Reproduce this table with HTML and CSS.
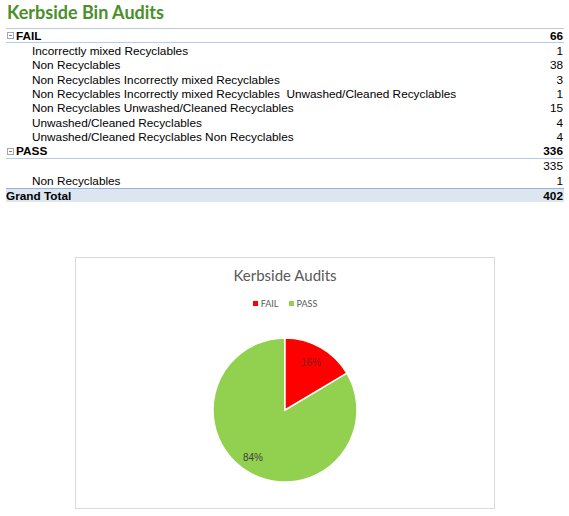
FILE: index.html
```html
<!DOCTYPE html>
<html>
<head>
    <title>Kerbside Bin Audits</title>
    <link rel="stylesheet" href="styles.css">
</head>
<body>
    <h1 class="title">Kerbside Bin Audits</h1>

    <div class="pivot">
        <div class="row group">
            <span class="label"><span class="toggle"></span>FAIL</span>
            <span class="num">66</span>
        </div>
        <div class="row item"><span class="label">Incorrectly mixed Recyclables</span><span class="num">1</span></div>
        <div class="row item"><span class="label">Non Recyclables</span><span class="num">38</span></div>
        <div class="row item"><span class="label">Non Recyclables Incorrectly mixed Recyclables</span><span class="num">3</span></div>
        <div class="row item"><span class="label">Non Recyclables Incorrectly mixed Recyclables&nbsp; Unwashed/Cleaned Recyclables</span><span class="num">1</span></div>
        <div class="row item"><span class="label">Non Recyclables Unwashed/Cleaned Recyclables</span><span class="num">15</span></div>
        <div class="row item"><span class="label">Unwashed/Cleaned Recyclables</span><span class="num">4</span></div>
        <div class="row item"><span class="label">Unwashed/Cleaned Recyclables Non Recyclables</span><span class="num">4</span></div>
        <div class="row group">
            <span class="label"><span class="toggle"></span>PASS</span>
            <span class="num">336</span>
        </div>
        <div class="row item"><span class="label"></span><span class="num">335</span></div>
        <div class="row item"><span class="label">Non Recyclables</span><span class="num">1</span></div>
        <div class="row total">
            <span class="label">Grand Total</span>
            <span class="num">402</span>
        </div>
    </div>

    <div class="chart">
        <div class="chart-title">Kerbside Audits</div>
        <div class="legend">
            <span class="key"><span class="swatch fail"></span>FAIL</span>
            <span class="key"><span class="swatch pass"></span>PASS</span>
        </div>
        <svg class="pie" width="146" height="146" viewBox="0 0 146 146">
            <path d="M73,73 L134.8,36.1 A72,72 0 1,1 73,1 Z" fill="#92d050" stroke="#fff" stroke-width="1.5"/>
            <path d="M73,73 L73,1 A72,72 0 0,1 134.8,36.1 Z" fill="#ff0000" stroke="#fff" stroke-width="1.5"/>
            <text x="99" y="29" class="pct fail-pct" text-anchor="middle">16%</text>
            <text x="41" y="124" class="pct pass-pct" text-anchor="middle">84%</text>
        </svg>
    </div>
</body>
</html>
```

FILE: styles.css
```css
body {
    font-family: "Liberation Sans", Arial, sans-serif;
    background-color: #ffffff;
    color: #000000;
    margin: 0;
    padding: 0 5px 0 6px;
}

.title {
    font-family: Lato, "Open Sans", sans-serif;
    font-size: 18px;
    font-weight: bold;
    color: #4b8f2b;
    margin: 0;
    padding: 1px 0 0 1px;
    height: 27px;
    line-height: 22px;
}

.pivot {
    border-top: 1px solid #b8cce4;
    font-size: 11.8px;
}

.row {
    display: flex;
    justify-content: space-between;
    align-items: center;
    height: 14.45px;
    box-sizing: border-box;
    padding-right: 1px;
}

.row .label {
    white-space: pre;
}

.item .label {
    padding-left: 26px;
}

.group {
    font-weight: bold;
    border-bottom: 1px solid #b8cce4;
}

.group .label {
    display: flex;
    align-items: center;
    padding-left: 1px;
}

.toggle {
    display: inline-block;
    position: relative;
    width: 7px;
    height: 7px;
    border: 1px solid #a6a6a6;
    box-sizing: border-box;
    margin-right: 2px;
}

.toggle::after {
    content: "";
    position: absolute;
    left: 1px;
    right: 1px;
    top: 2px;
    height: 1px;
    background-color: #7f7f7f;
}

.total {
    font-weight: bold;
    background-color: #dce6f1;
    border-top: 1px solid #95b3d7;
}

.chart {
    width: 420px;
    height: 252px;
    box-sizing: border-box;
    margin: 55px 0 0 69px;
    border: 1px solid #d9d9d9;
    display: flex;
    flex-direction: column;
    align-items: center;
    font-family: Lato, "Open Sans", sans-serif;
    color: #595959;
}

.chart-title {
    font-size: 15px;
    margin-top: 8px;
    line-height: 18px;
}

.legend {
    display: flex;
    gap: 10px;
    font-size: 9px;
    margin-top: 14px;
}

.key {
    display: flex;
    align-items: center;
}

.swatch {
    width: 5px;
    height: 5px;
    margin-right: 3px;
}

.swatch.fail {
    background-color: #ff0000;
}

.swatch.pass {
    background-color: #92d050;
}

.pie {
    margin-top: 28px;
}

.pct {
    font-family: "Liberation Sans", Arial, sans-serif;
    font-size: 10px;
}

.fail-pct {
    fill: #8b1a1a;
}

.pass-pct {
    fill: #404040;
}
```
